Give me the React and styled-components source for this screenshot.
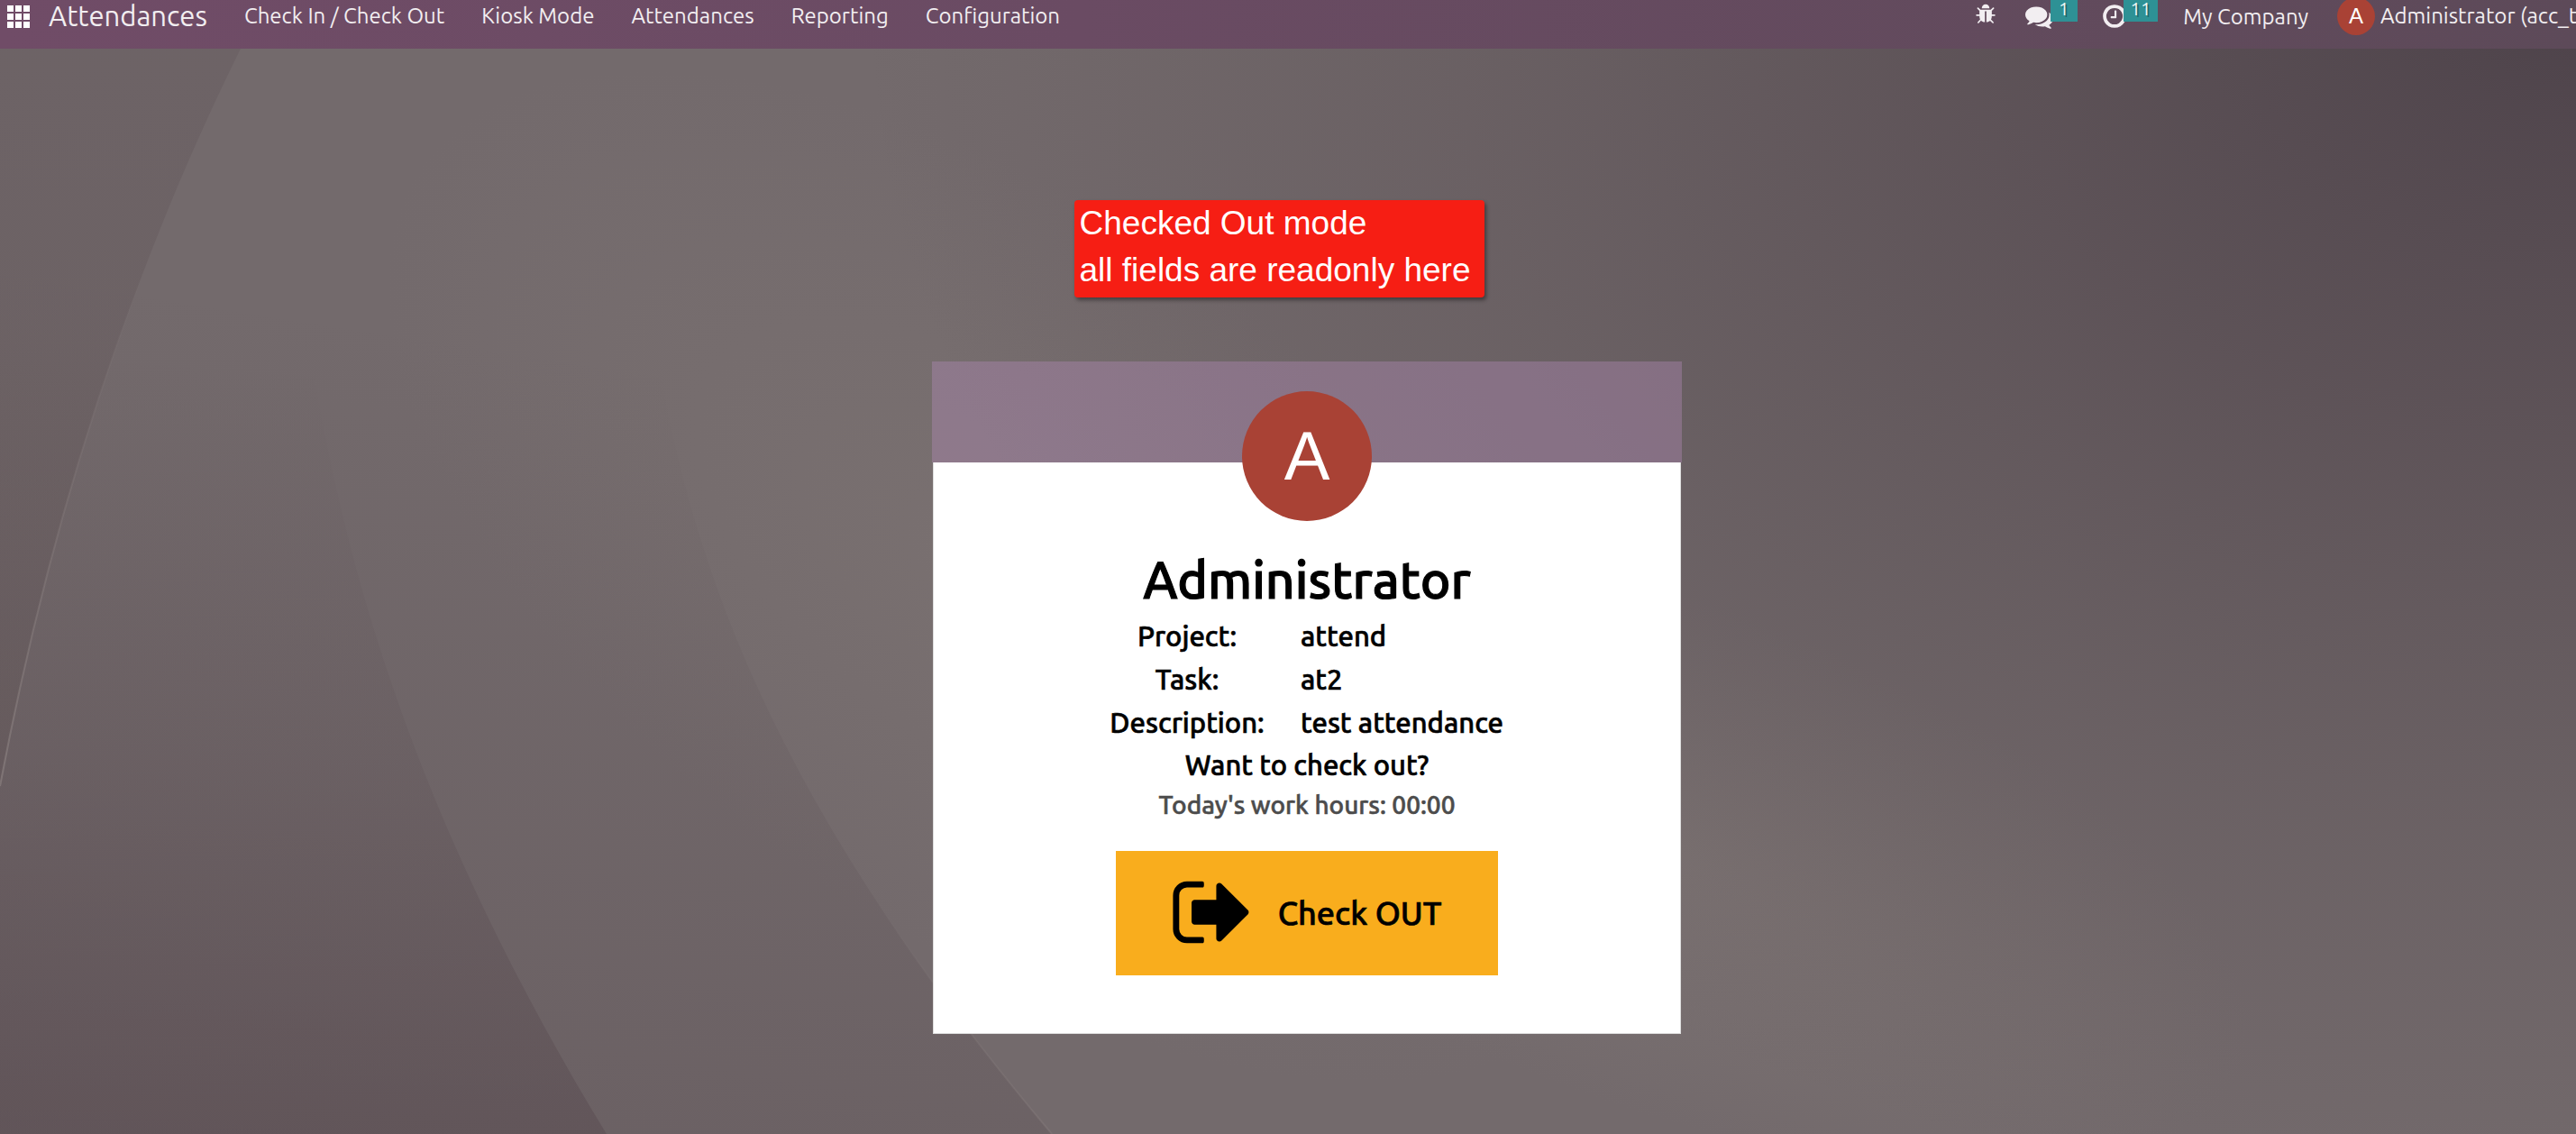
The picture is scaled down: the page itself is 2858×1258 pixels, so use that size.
import React from "react";
import styled, { createGlobalStyle, css } from "styled-components";

const GlobalStyle = createGlobalStyle`
  *, *::before, *::after { box-sizing: border-box; }
  body {
    margin: 0;
    font-family: Ubuntu, "Noto Sans", sans-serif;
    font-size: 24px;
    color: #000;
    background: #726869;
  }
  button { font: inherit; color: inherit; border: 0; cursor: pointer; }
  a { color: inherit; text-decoration: none; }
`;

const mediumText = css`
  font-weight: 500;
  -webkit-text-stroke: 0.02em currentColor;
`;

const Page = styled.div`
  position: relative;
  display: flex;
  flex-direction: column;
  min-height: 100vh;
  overflow: hidden;
`;

const BackdropArt = styled.svg`
  position: absolute;
  inset: 0;
  width: 100%;
  height: 100%;
`;

const Navbar = styled.header`
  position: relative;
  display: flex;
  align-items: flex-start;
  justify-content: space-between;
  height: 54px;
  padding-left: 8px;
  color: #f2eef1;
  white-space: nowrap;
  background: linear-gradient(90deg, #704c67 0%, #6a4b63 42%, #5d4a59 100%);
`;

const NavGroup = styled.nav`
  display: flex;
  align-items: center;
  height: 36px;
  gap: ${(p) => p.$gap}px;
`;

const AppsButton = styled.button`
  display: flex;
  padding: 0;
  background: none;
  color: #fff;
`;

const BrandGroup = styled.div`
  display: flex;
  align-items: center;
  gap: 21px;
`;

const Brand = styled.a`
  font-size: 31px;
  line-height: 36px;
`;

const NavLink = styled.a`
  line-height: 36px;
`;

const TrayButton = styled.button`
  display: flex;
  align-items: center;
  height: 36px;
  padding: 0;
  background: none;
`;

const BugButton = styled(TrayButton)`
  padding-right: 4px;
  padding-bottom: 4px;
`;

const Badge = styled.span`
  position: relative;
  align-self: flex-start;
  min-width: 30px;
  height: 24px;
  margin-left: -3px;
  padding: 0 8px;
  font-size: 20px;
  line-height: 20px;
  text-align: center;
  text-shadow: 2px 2px 0 rgba(0, 0, 0, 0.3);
  color: #f2f6f6;
  background: #2e9195;
`;

const Company = styled(TrayButton)`
  padding-right: 4px;
`;

const UserButton = styled(TrayButton)`
  gap: 6px;
  width: 265px;
  overflow: visible;
`;

const UserName = styled.span`
  flex: 1;
  min-width: 0;
  overflow: hidden;
  text-align: left;
  line-height: 36px;
`;

const Avatar = styled.span`
  display: flex;
  align-items: center;
  justify-content: center;
  flex: none;
  width: ${(p) => p.$size}px;
  height: ${(p) => p.$size}px;
  border-radius: 50%;
  font-family: "Liberation Sans", Arial, sans-serif;
  font-size: ${(p) => p.$font}px;
  font-weight: 400;
  line-height: 1;
  color: #fff;
  background: #a94235;
`;

const Main = styled.main`
  position: relative;
  display: flex;
  flex-direction: column;
  align-items: center;
  padding: 168px 0 110px 42px;
`;

const Note = styled.p`
  width: 455px;
  margin: 0 62px 71px 0;
  padding: 0 6px 4px;
  border-radius: 4px;
  font-family: "Liberation Sans", Arial, sans-serif;
  font-size: 37px;
  line-height: 52px;
  white-space: nowrap;
  color: #fff;
  background: #f61e14;
  box-shadow: 2px 3px 4px rgba(0, 0, 0, 0.4);
`;

const Card = styled.section`
  display: flex;
  flex-direction: column;
  align-items: center;
  width: 832px;
`;

const CardBanner = styled.div`
  align-self: stretch;
  height: 112px;
  background: rgba(178, 138, 182, 0.4);
`;

const CardBody = styled.div`
  display: flex;
  flex-direction: column;
  align-items: center;
  width: 830px;
  padding-bottom: 64px;
  border: solid #ddd;
  border-width: 0 1px 1px;
  background: #fff;
`;

const CardAvatar = styled(Avatar)`
  margin-top: -79px;
  margin-bottom: 26px;
`;

const EmployeeName = styled.h1`
  margin: 0;
  font-size: 57px;
  line-height: 78px;
  ${mediumText}
`;

const Details = styled.table`
  width: 514px;
  table-layout: fixed;
  border-collapse: collapse;
  font-size: 31px;
  line-height: 48px;
`;

const DetailLabel = styled.th`
  width: 248px;
  padding: 0;
  text-align: center;
  ${mediumText}
`;

const DetailValue = styled.td`
  padding: 0 0 0 2px;
  ${mediumText}
`;

const Question = styled.h2`
  margin: 0;
  font-size: 31px;
  line-height: 46px;
  ${mediumText}
`;

const WorkHours = styled.p`
  margin: 0 0 30px;
  font-size: 28px;
  line-height: 42px;
  color: #4c4c4c;
  ${mediumText}
`;

const CheckOutButton = styled.button`
  display: flex;
  align-items: center;
  gap: 24px;
  height: 138px;
  padding: 0 63px 2px 60px;
  font-size: 36px;
  background: #f9ad1d;
  ${mediumText}
`;

function Backdrop() {
  return (
    <BackdropArt viewBox="0 0 2858 1258" preserveAspectRatio="none" aria-hidden="true">
      <defs>
        <radialGradient id="corner" gradientUnits="userSpaceOnUse" cx="0" cy="0" r="1" gradientTransform="translate(2858 0) scale(1900 1350)">
          <stop offset="0" stopColor="#4a3f47" stopOpacity="0.92" />
          <stop offset="0.35" stopColor="#4f434a" stopOpacity="0.6" />
          <stop offset="0.7" stopColor="#554a4f" stopOpacity="0.26" />
          <stop offset="1" stopColor="#5a4f53" stopOpacity="0" />
        </radialGradient>
        <radialGradient id="glowLeft" gradientUnits="userSpaceOnUse" cx="0" cy="0" r="1" gradientTransform="translate(1120 640) rotate(35) scale(800 400)">
          <stop offset="0" stopColor="#7f7674" stopOpacity="0.5" />
          <stop offset="1" stopColor="#7f7674" stopOpacity="0" />
        </radialGradient>
        <radialGradient id="glowRight" gradientUnits="userSpaceOnUse" cx="0" cy="0" r="1" gradientTransform="translate(1850 950) rotate(20) scale(680 280)">
          <stop offset="0" stopColor="#827977" stopOpacity="0.55" />
          <stop offset="1" stopColor="#827977" stopOpacity="0" />
        </radialGradient>
        <linearGradient id="edge" x1="0" y1="0" x2="0" y2="1">
          <stop offset="0" stopColor="#665b5f" stopOpacity="0.45" />
          <stop offset="1" stopColor="#5c4f50" stopOpacity="0.3" />
        </linearGradient>
        <linearGradient id="sweep" gradientUnits="userSpaceOnUse" x1="300" y1="400" x2="240" y2="1258">
          <stop offset="0" stopColor="#54454b" stopOpacity="0" />
          <stop offset="0.5" stopColor="#54454b" stopOpacity="0.14" />
          <stop offset="1" stopColor="#54454b" stopOpacity="0.42" />
        </linearGradient>
        <linearGradient id="sweepWide" gradientUnits="userSpaceOnUse" x1="700" y1="400" x2="560" y2="1300">
          <stop offset="0" stopColor="#574a4f" stopOpacity="0" />
          <stop offset="1" stopColor="#574a4f" stopOpacity="0.3" />
        </linearGradient>
        <linearGradient id="rim" x1="0" y1="0" x2="0" y2="1">
          <stop offset="0.3" stopColor="#a29896" stopOpacity="0" />
          <stop offset="1" stopColor="#a29896" stopOpacity="0.4" />
        </linearGradient>
        <linearGradient id="rimLow" gradientUnits="userSpaceOnUse" x1="0" y1="1000" x2="0" y2="1258">
          <stop offset="0" stopColor="#8f8584" stopOpacity="0" />
          <stop offset="1" stopColor="#8f8584" stopOpacity="0.3" />
        </linearGradient>
      </defs>
      <rect width="2858" height="1258" fill="#736a6c" />
      <rect width="2858" height="1258" fill="url(#glowLeft)" />
      <rect width="2858" height="1258" fill="url(#glowRight)" />
      <rect width="2858" height="1258" fill="url(#corner)" />
      <path d="M715 250C735 600 865 900 1167 1258H0V250Z" fill="url(#sweepWide)" />
      <path d="M325 200C345 520 430 860 673 1258H0V200Z" fill="url(#sweep)" />
      <path d="M294 0L267 54C180 230 70 500 0 872V0Z" fill="url(#edge)" />
      <path d="M267 54C180 230 70 500 0 872" fill="none" stroke="url(#rim)" strokeWidth="2" />
      <path d="M715 250C735 600 865 900 1167 1258" fill="none" stroke="url(#rimLow)" strokeWidth="2" />
    </BackdropArt>
  );
}

const AppsIcon = () => (
  <svg width="25" height="25" viewBox="0 0 25 25" fill="currentColor" aria-hidden="true">
    {[0, 9, 18].map((y) => [0, 9, 18].map((x) => <rect key={`${x}-${y}`} x={x} y={y} width="7" height="7" />))}
  </svg>
);

const BugIcon = () => (
  <svg width="24" height="24" viewBox="0 0 1792 1792" fill="currentColor" aria-hidden="true">
    <path d="M1696 960q0 26-19 45t-45 19h-224q0 171-67 290l208 209q19 19 19 45t-19 45q-18 19-45 19t-45-19l-198-197q-5 5-15 13t-42 28.5-65 36.5-82 29-97 13v-896h-128v896q-51 0-101.5-13.5t-87-33-66-39-43.5-32.5l-15-14-183 207q-20 21-48 21-24 0-43-16-19-18-20.5-44.5t15.5-46.5l202-227q-58-114-58-274h-224q-26 0-45-19t-19-45 19-45 45-19h224v-294l-173-173q-19-19-19-45t19-45 45-19 45 19l173 173h844l173-173q19-19 45-19t45 19 19 45-19 45l-173 173v294h224q26 0 45 19t19 45zm-480-576h-640q0-133 93.5-226.5t226.5-93.5 226.5 93.5 93.5 226.5z" />
  </svg>
);

const CommentsIcon = () => (
  <svg width="31" height="31" viewBox="0 0 1792 1792" fill="currentColor" aria-hidden="true">
    <path d="M1408 768q0 139-94 257t-256.5 186.5-353.5 68.5q-86 0-176-16-124 88-278 128-36 9-86 16h-3q-11 0-20.5-8t-11.5-21q-1-3-1-6.5t.5-6.5 2-6l2.5-5 3.5-5.5 4-5 4.5-5 4-4.5q5-6 23-25t26-29.5 22.5-29 25-38.5 20.5-44q-124-72-195-177t-71-224q0-139 94-257t256.5-186.5 353.5-68.5 353.5 68.5 256.5 186.5 94 257zm384 256q0 120-71 224.5t-195 176.5q10 24 20.5 44t25 38.5 22.5 29 26 29.5 23 25q1 1 4 4.5t4.5 5 4 5 3.5 5.5l2.5 5 2 6 .5 6.5-1 6.5q-3 14-13 22t-22 7q-50-7-86-16-154-40-278-128-90 16-176 16-271 0-472-132 58 4 88 4 161 0 309-45t264-129q125-92 192-212t67-254q0-77-23-152 129 71 204 178t75 230z" />
  </svg>
);

const ClockIcon = () => (
  <svg width="26" height="30" viewBox="0 0 1536 1792" fill="currentColor" aria-hidden="true">
    <path d="M896 544v448q0 14-9 23t-23 9h-320q-14 0-23-9t-9-23v-64q0-14 9-23t23-9h224v-352q0-14 9-23t23-9h64q14 0 23 9t9 23zm416 352q0-148-73-273t-198-198-273-73-273 73-198 198-73 273 73 273 198 198 273 73 273-73 198-198 73-273zm224 0q0 209-103 385.5t-279.5 279.5-385.5 103-385.5-103-279.5-279.5-103-385.5 103-385.5 279.5-279.5 385.5-103 385.5 103 279.5 279.5 103 385.5z" />
  </svg>
);

const SignOutIcon = () => (
  <svg width="96" height="96" viewBox="0 0 1792 1792" fill="currentColor" aria-hidden="true">
    <path d="M704 1440q0 4 1 20t.5 26.5-3 23.5-10 19.5-20.5 6.5h-320q-119 0-203.5-84.5t-84.5-203.5v-704q0-119 84.5-203.5t203.5-84.5h320q13 0 22.5 9.5t9.5 22.5q0 4 1 20t.5 26.5-3 23.5-10 19.5-20.5 6.5h-320q-66 0-113 47t-47 113v704q0 66 47 113t113 47h312l11.5 1 11.5 3 8 5.5 7 9 2 13.5zm928-544q0 26-19 45l-544 544q-19 19-45 19t-45-19-19-45v-288h-448q-26 0-45-19t-19-45v-384q0-26 19-45t45-19h448v-288q0-26 19-45t45-19 45 19l544 544q19 19 19 45z" />
  </svg>
);

const MENU = ["Check In / Check Out", "Kiosk Mode", "Attendances", "Reporting", "Configuration"];

const DETAILS = [
  ["Project:", "attend"],
  ["Task:", "at2"],
  ["Description:", "test attendance"],
];

export default function App() {
  return (
    <>
      <GlobalStyle />
      <Page>
        <Backdrop />
        <Navbar>
          <NavGroup $gap={41} aria-label="Main menu">
            <BrandGroup>
              <AppsButton aria-label="Applications">
                <AppsIcon />
              </AppsButton>
              <Brand href="#">Attendances</Brand>
            </BrandGroup>
            {MENU.map((item) => (
              <NavLink key={item} href="#">{item}</NavLink>
            ))}
          </NavGroup>
          <NavGroup $gap={28} aria-label="System tray">
            <BugButton aria-label="Debug">
              <BugIcon />
            </BugButton>
            <TrayButton aria-label="Messages">
              <CommentsIcon />
              <Badge>1</Badge>
            </TrayButton>
            <TrayButton aria-label="Activities">
              <ClockIcon />
              <Badge>11</Badge>
            </TrayButton>
            <Company>My Company</Company>
            <UserButton>
              <Avatar $size={42} $font={24}>A</Avatar>
              <UserName>Administrator (acc_te</UserName>
            </UserButton>
          </NavGroup>
        </Navbar>
        <Main>
          <Note>
            Checked Out mode
            <br />
            all fields are readonly here
          </Note>
          <Card>
            <CardBanner />
            <CardBody>
              <CardAvatar $size={144} $font={76}>A</CardAvatar>
              <EmployeeName>Administrator</EmployeeName>
              <Details>
                <tbody>
                  {DETAILS.map(([label, value]) => (
                    <tr key={label}>
                      <DetailLabel scope="row">{label}</DetailLabel>
                      <DetailValue>{value}</DetailValue>
                    </tr>
                  ))}
                </tbody>
              </Details>
              <Question>Want to check out?</Question>
              <WorkHours>Today's work hours: 00:00</WorkHours>
              <CheckOutButton>
                <SignOutIcon />
                Check OUT
              </CheckOutButton>
            </CardBody>
          </Card>
        </Main>
      </Page>
    </>
  );
}
